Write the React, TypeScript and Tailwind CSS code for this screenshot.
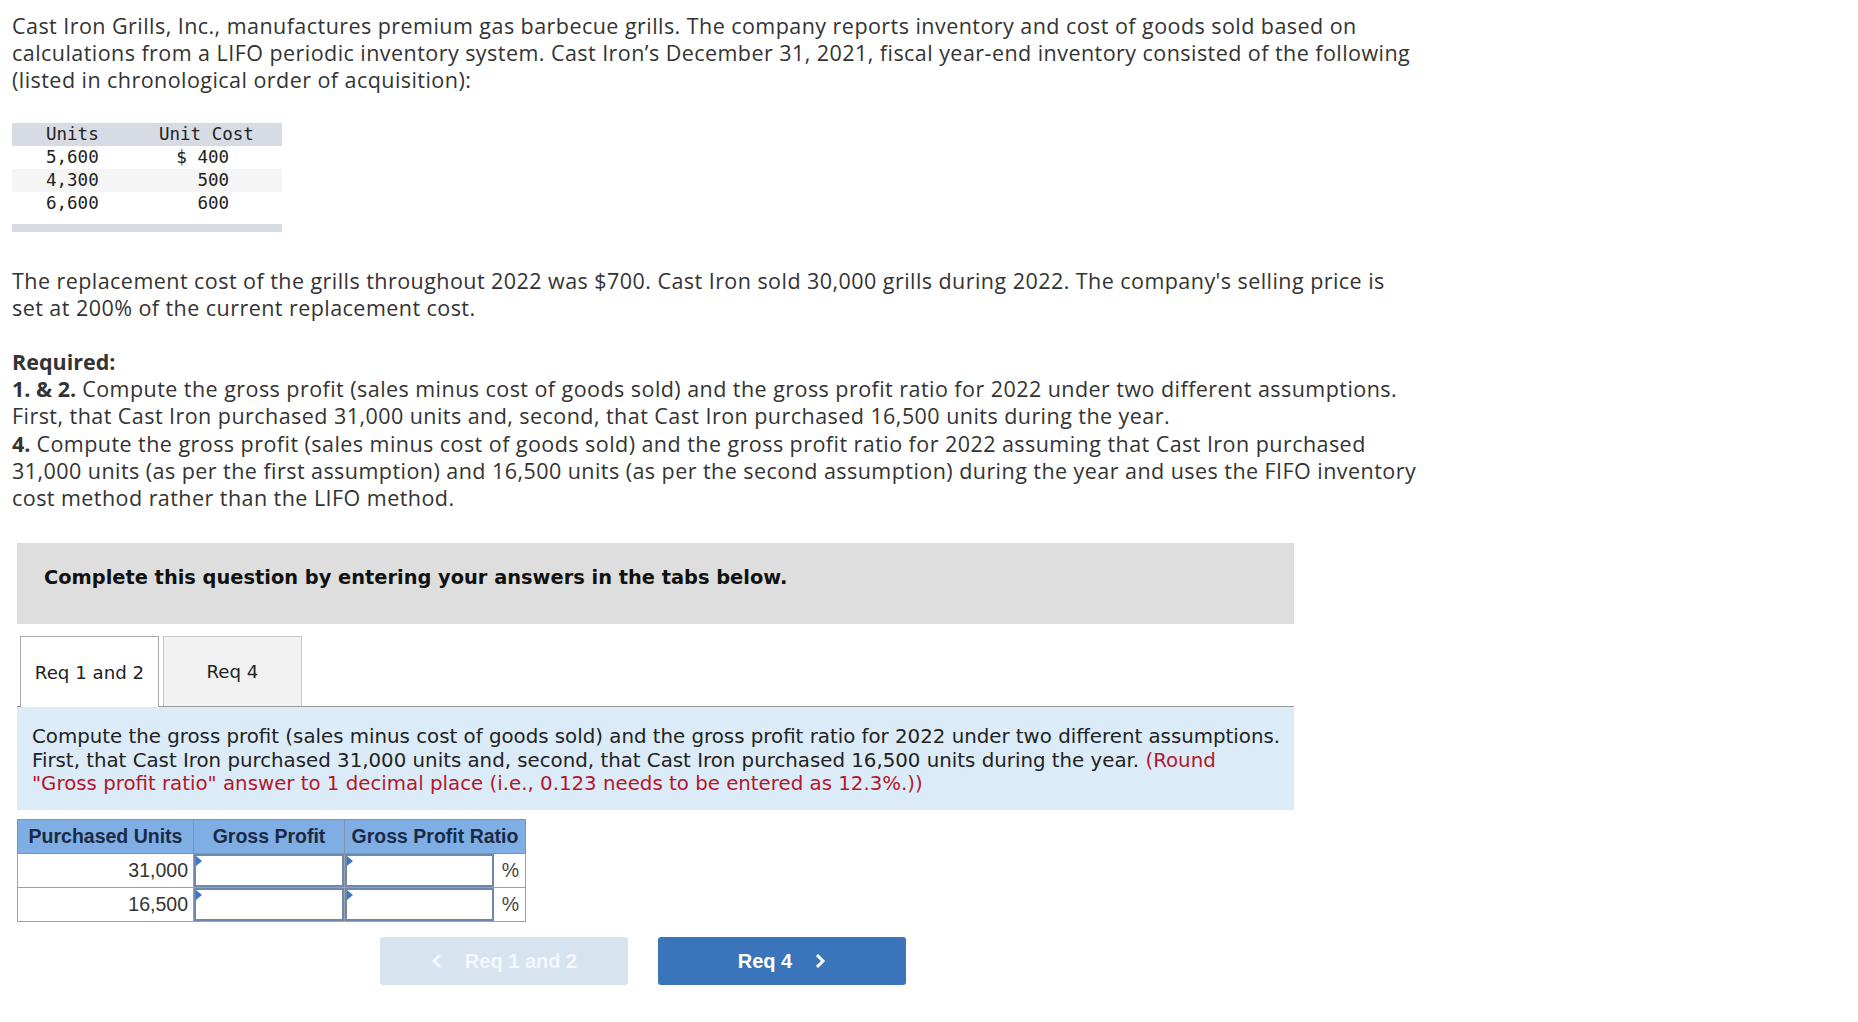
import React from "react";

const inventory = [
  { units: "5,600", cost: "$ 400", shade: false },
  { units: "4,300", cost: "500", shade: true },
  { units: "6,600", cost: "600", shade: false },
];

function Marker() {
  return (
    <span className="absolute left-0 top-0 h-0 w-0 border-y-[5px] border-l-[6px] border-y-transparent border-l-[#3b78c4]" />
  );
}

function AnswerInput() {
  return (
    <div className="relative h-full w-full border-2 border-[#6e88ad] bg-white">
      <Marker />
    </div>
  );
}

export default function App() {
  const rows = ["31,000", "16,500"];

  return (
    <main className="min-h-screen bg-white pl-[12px] pt-[12px] text-[#333]">
      {/* Problem statement */}
      <div className="font-['Open_Sans',sans-serif] text-[21.5px] leading-[27.2px] tracking-[0.45px]">
        <p>
          Cast Iron Grills, Inc., manufactures premium gas barbecue grills. The company reports inventory and cost of goods sold based on
          <br />
          calculations from a LIFO periodic inventory system. Cast Iron’s December 31, 2021, fiscal year-end inventory consisted of the following
          <br />
          (listed in chronological order of acquisition):
        </p>

        <div className="mt-[29px] w-[270px] font-['DejaVu_Sans_Mono',monospace] text-[17.5px] leading-[23px] tracking-normal text-[#222]">
          <div className="flex bg-[#d6dbe4]">
            <div className="w-[147px] pl-[34px]">Units</div>
            <div className="whitespace-nowrap">Unit Cost</div>
          </div>
          {inventory.map((r) => (
            <div key={r.units} className={r.shade ? "flex bg-[#f5f5f5]" : "flex"}>
              <div className="w-[147px] pl-[34px]">{r.units}</div>
              <div className="w-[70px] whitespace-pre text-right">{r.cost}</div>
            </div>
          ))}
          <div className="mt-[9px] h-[8px] bg-[#d6dbe4]" />
        </div>

        <p className="mt-[35px]">
          The replacement cost of the grills throughout 2022 was $700. Cast Iron sold 30,000 grills during 2022. The company's selling price is
          <br />
          set at 200% of the current replacement cost.
        </p>

        <p className="mt-[27px]">
          <b className="font-bold tracking-normal">Required:</b>
          <br />
          <b className="font-bold tracking-normal">1. &amp; 2.</b> Compute the gross profit (sales minus cost of goods sold) and the gross profit ratio for 2022 under two different assumptions.
          <br />
          First, that Cast Iron purchased 31,000 units and, second, that Cast Iron purchased 16,500 units during the year.
          <br />
          <b className="font-bold tracking-normal">4.</b> Compute the gross profit (sales minus cost of goods sold) and the gross profit ratio for 2022 assuming that Cast Iron purchased
          <br />
          31,000 units (as per the first assumption) and 16,500 units (as per the second assumption) during the year and uses the FIFO inventory
          <br />
          cost method rather than the LIFO method.
        </p>
      </div>

      {/* Question area */}
      <div className="ml-[5px] mt-[32px] w-[1277px] font-['DejaVu_Sans',sans-serif]">
        <div className="h-[81px] bg-[#dedede] pl-[27px] pt-[23px] text-[19.4px] font-bold leading-[24px] text-[#111]">
          Complete this question by entering your answers in the tabs below.
        </div>

        <div className="mt-[12px] flex gap-[4px] border-b border-[#999] pl-[3px]">
          <div className="-mb-px flex h-[71px] w-[139px] items-center justify-center border border-b-0 border-[#aaa] bg-white text-[18.2px] text-[#222]">
            Req 1 and 2
          </div>
          <div className="flex h-[70px] w-[139px] items-center justify-center border border-b-0 border-[#c8c8c8] bg-[#f2f2f2] text-[18.2px] text-[#222]">
            Req 4
          </div>
        </div>

        <div className="h-[103px] bg-[#dcebf8] pl-[15px] pt-[18px] text-[19.8px] leading-[23.5px] text-[#222]">
          Compute the gross profit (sales minus cost of goods sold) and the gross profit ratio for 2022 under two different assumptions.
          <br />
          First, that Cast Iron purchased 31,000 units and, second, that Cast Iron purchased 16,500 units during the year.{" "}
          <span className="text-[#b3172a]">
            (Round
            <br />
            "Gross profit ratio" answer to 1 decimal place (i.e., 0.123 needs to be entered as 12.3%.))
          </span>
        </div>

        <table className="mt-[9px] w-[509px] border-collapse font-['Liberation_Sans',Arial,sans-serif] text-[19.5px]">
          <thead>
            <tr className="h-[34px] bg-[#7eaee4] text-[#1b2a44]">
              <th className="w-[176px] border border-[#8093ab] font-bold">Purchased Units</th>
              <th className="w-[151px] border border-[#8093ab] font-bold">Gross Profit</th>
              <th colSpan={2} className="border border-[#8093ab] font-bold whitespace-nowrap">
                Gross Profit Ratio
              </th>
            </tr>
          </thead>
          <tbody>
            {rows.map((u) => (
              <tr key={u} className="h-[34px]">
                <td className="border border-[#a0a0a0] pr-[5px] text-right text-[#333]">{u}</td>
                <td className="h-[34px] border border-[#a0a0a0] p-0">
                  <AnswerInput />
                </td>
                <td className="h-[34px] w-[149px] border-y border-l border-[#a0a0a0] p-0">
                  <AnswerInput />
                </td>
                <td className="border-y border-r border-[#a0a0a0] pr-[6px] text-right text-[#444]">%</td>
              </tr>
            ))}
          </tbody>
        </table>

        <div className="ml-[363px] mt-[15px] flex gap-[30px] font-['Liberation_Sans',Arial,sans-serif] text-[20px] font-bold">
          <button className="flex h-[48px] w-[248px] items-center justify-center gap-[22px] rounded-[3px] bg-[#d8e3f0] text-[#f4f7fb]">
            <svg width="12" height="18" viewBox="0 0 12 18" fill="none">
              <polyline points="9,3 3,9 9,15" stroke="currentColor" strokeWidth="3" />
            </svg>
            <span>Req 1 and 2</span>
          </button>
          <button className="flex h-[48px] w-[248px] items-center justify-center gap-[22px] rounded-[3px] bg-[#3a75bb] text-white">
            <span>Req 4</span>
            <svg width="12" height="18" viewBox="0 0 12 18" fill="none">
              <polyline points="3,3 9,9 3,15" stroke="currentColor" strokeWidth="3" />
            </svg>
          </button>
        </div>
      </div>
    </main>
  );
}
